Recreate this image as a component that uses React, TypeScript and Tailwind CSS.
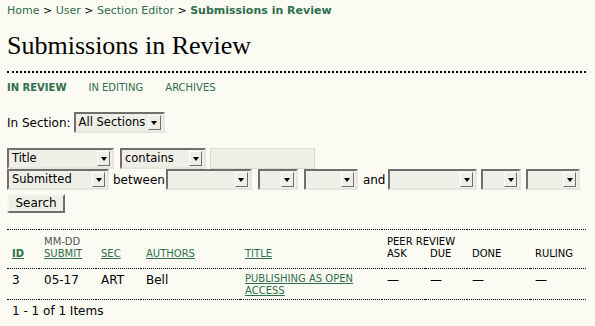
const link = "text-[#2e6e4d]"

const Sel = ({ w, label }: { w: string; label?: string }) => (
    <div className={`${w} h-[21px] flex items-center justify-between bg-[#efefe7] border-2 border-l-[#6f6f6f] border-t-[#6f6f6f] border-r-[#e6e6de] border-b-[#e6e6de] pl-[3px] pr-[2px]`}>
        <span className="text-[11.5px] leading-none text-black whitespace-nowrap">{label}</span>
        <span className="w-[13px] h-[15px] shrink-0 flex items-center justify-center bg-[#efefe7] border border-t-white border-l-white border-r-[#6f6f6f] border-b-[#6f6f6f]">
            <span className="w-0 h-0 border-l-[3.5px] border-r-[3.5px] border-t-[4px] border-l-transparent border-r-transparent border-t-black" />
        </span>
    </div>
)

const Th = ({ children, w }: { children?: React.ReactNode; w: string }) => (
    <th className={`${w} text-left font-normal align-bottom pl-[5px] pb-[8px] pt-[6px] text-[10px] leading-[12px]`}>{children}</th>
)

export default function App() {
    return (
        <div className="min-h-[326px] w-[595px] bg-[#fbfbf3] text-black px-[7px] pt-[4px]" style={{ fontFamily: "'DejaVu Sans', Verdana, sans-serif" }}>
            <div className="text-[11px] leading-[14px]">
                <span className={link}>Home</span> &gt; <span className={link}>User</span> &gt; <span className={link}>Section Editor</span> &gt; <span className={`${link} font-bold`}>Submissions in Review</span>
            </div>
            <h1 className="mt-[13px] text-[26px] leading-[30px] text-black" style={{ fontFamily: "'Liberation Serif', Georgia, serif" }}>Submissions in Review</h1>
            <div className="mt-[10px] mr-[2px] border-b-2 border-dotted border-black" />
            <div className="mt-[9px] flex gap-[22px] text-[10px] leading-[12px] uppercase">
                <span className={`${link} font-bold`}>In Review</span>
                <span className={link}>In Editing</span>
                <span className={link}>Archives</span>
            </div>
            <div className="mt-[18px] flex items-center gap-[3px] text-[12px]">
                <span>In Section:</span>
                <Sel w="w-[91px]" label="All Sections" />
            </div>
            <div className="mt-[15px] flex items-center gap-[6px]">
                <Sel w="w-[107px]" label="Title" />
                <Sel w="w-[86px]" label="contains" />
                <div className="w-[105px] h-[21px] bg-[#efefe7] border border-[#dcdcd4] -ml-[2px]" />
            </div>
            <div className="flex items-center text-[12px]">
                <Sel w="w-[102px]" label="Submitted" />
                <span className="ml-[4px] mr-[1px]">between</span>
                <Sel w="w-[86px]" />
                <div className="w-[6px]" />
                <Sel w="w-[40px]" />
                <div className="w-[6px]" />
                <Sel w="w-[54px]" />
                <span className="ml-[5px] mr-[3px]">and</span>
                <Sel w="w-[89px]" />
                <div className="w-[4px]" />
                <Sel w="w-[40px]" />
                <div className="w-[5px]" />
                <Sel w="w-[54px]" />
            </div>
            <button className="mt-[2px] w-[58px] h-[19px] bg-[#efefe7] border-2 border-t-[#f6f6ee] border-l-[#f6f6ee] border-r-[#6f6f6f] border-b-[#6f6f6f] text-[12px] leading-none text-black">Search</button>
            <table className="mt-[15px] w-[579px] border-collapse table-fixed">
                <thead>
                    <tr className="border-t border-b border-dotted border-black">
                        <Th w="w-[32px]"><span className={`${link} font-bold underline`}>ID</span></Th>
                        <Th w="w-[57px]"><span className="text-[#555]">MM-DD</span><br /><span className={`${link} underline`}>SUBMIT</span></Th>
                        <Th w="w-[45px]"><span className={`${link} underline`}>SEC</span></Th>
                        <Th w="w-[99px]"><span className={`${link} underline`}>AUTHORS</span></Th>
                        <Th w="w-[142px]"><span className={`${link} underline`}>TITLE</span></Th>
                        <Th w="w-[43px]"><span className="whitespace-nowrap">PEER REVIEW</span><br />ASK</Th>
                        <Th w="w-[42px]">DUE</Th>
                        <Th w="w-[63px]">DONE</Th>
                        <Th w="w-[56px]">RULING</Th>
                    </tr>
                </thead>
                <tbody>
                    <tr className="border-b border-dotted border-black text-[12px] leading-[12px] align-top">
                        <td className="pl-[5px] pt-[5px] pb-[3px]">3</td>
                        <td className="pl-[5px] pt-[5px]">05-17</td>
                        <td className="pl-[5px] pt-[5px]">ART</td>
                        <td className="pl-[5px] pt-[5px]">Bell</td>
                        <td className={`pl-[5px] pt-[4px] pb-[2px] text-[10px] leading-[12px] ${link} underline`}>PUBLISHING AS OPEN ACCESS</td>
                        <td className="pl-[5px] pt-[5px]">—</td>
                        <td className="pl-[5px] pt-[5px]">—</td>
                        <td className="pl-[5px] pt-[5px]">—</td>
                        <td className="pl-[5px] pt-[5px]">—</td>
                    </tr>
                </tbody>
            </table>
            <div className="pl-[5px] pt-[4px] text-[12px] leading-[14px]">1 - 1 of 1 Items</div>
        </div>
    )
}
